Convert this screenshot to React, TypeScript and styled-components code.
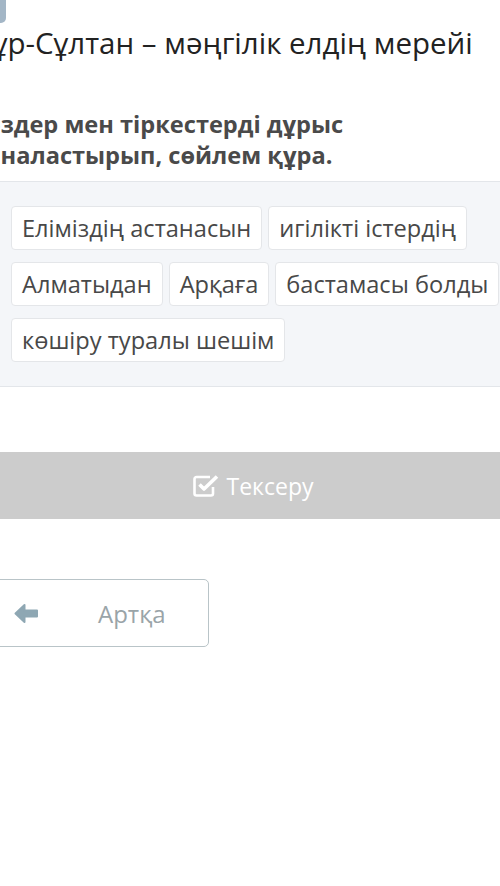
import React from "react";
import styled, { createGlobalStyle } from "styled-components";

const Global = createGlobalStyle`
  html, body { margin: 0; padding: 0; background: #fff; overflow: hidden; }
  body { font-family: "Open Sans", "Noto Sans", sans-serif; }
`;

const Page = styled.div`
  width: 560px;
  margin-left: -29px;
  display: flex;
  flex-direction: column;
`;

const Badge = styled.div`
  width: 40px;
  height: 23px;
  margin-left: -5px;
  background: #a3b6c6;
  border-radius: 0 0 5px 0;
`;

const Title = styled.h1`
  margin: 1px 0 0 0;
  font-size: 29.5px;
  font-weight: 400;
  line-height: 38px;
  color: #222;
  white-space: nowrap;
`;

const Instruction = styled.p`
  margin: 47px 0 0 0;
  font-size: 23.6px;
  font-weight: 700;
  line-height: 31px;
  color: #4a4a4a;
  white-space: nowrap;
`;

const Panel = styled.div`
  margin-top: 10px;
  background: #f4f6f9;
  border-top: 1px solid #e3e6ea;
  border-bottom: 1px solid #e3e6ea;
  padding: 24px 10px 24px 40px;
  display: flex;
  flex-wrap: wrap;
  gap: 12px 6px;
  align-content: flex-start;
`;

const Chip = styled.div`
  height: 44px;
  box-sizing: border-box;
  padding: 0 10px;
  display: flex;
  align-items: center;
  background: #fff;
  border: 1px solid #e4e6e9;
  border-radius: 4px;
  font-size: 23.6px;
  color: #484848;
  white-space: nowrap;
`;

const CheckButton = styled.div`
  margin-top: 65px;
  height: 67px;
  background: #cccccc;
  display: flex;
  align-items: center;
  justify-content: center;
  gap: 8px;
  color: #fff;
  font-size: 23px;
  padding-left: 4px;
`;

const BackButton = styled.div`
  margin-top: 60px;
  width: 238px;
  height: 68px;
  box-sizing: border-box;
  border: 1px solid #b9c4c8;
  border-radius: 5px;
  display: flex;
  align-items: center;
  padding-left: 42px;
  color: #9aa4a8;
  font-size: 24px;
`;

const BackLabel = styled.span`
  margin-left: 59px;
`;

const CheckIcon = () => (
  <svg width="26" height="24" viewBox="0 0 26 24">
    <path
      d="M20 13v6.5a2 2 0 0 1-2 2H3.5a2 2 0 0 1-2-2V5a2 2 0 0 1 2-2H17"
      fill="none"
      stroke="#fff"
      strokeWidth="2.6"
      strokeLinejoin="round"
    />
    <path d="M6.5 10.5l4.5 4.5L24 2.5" fill="none" stroke="#fff" strokeWidth="3.6" strokeLinejoin="round" />
  </svg>
);

const ArrowIcon = () => (
  <svg width="25" height="21" viewBox="0 0 25 21">
    <path
      d="M1.5 10.5L10.5 2v5.5h12.5v6H10.5V19z"
      fill="#8ea7b3"
      strokeLinejoin="round"
      stroke="#8ea7b3"
      strokeWidth="2"
    />
  </svg>
);

const words = [
  "Еліміздің астанасын",
  "игілікті істердің",
  "Алматыдан",
  "Арқаға",
  "бастамасы болды",
  "көшіру туралы шешім",
];

export default function App() {
  return (
    <>
      <Global />
      <Page>
        <Badge />
        <Title>Нұр-Сұлтан – мәңгілік елдің мерейі</Title>
        <Instruction>
          Сөздер мен тіркестерді дұрыс
          <br />
          орналастырып, сөйлем құра.
        </Instruction>
        <Panel>
          {words.map((w) => (
            <Chip key={w}>{w}</Chip>
          ))}
        </Panel>
        <CheckButton>
          <CheckIcon />
          <span>Тексеру</span>
        </CheckButton>
        <BackButton>
          <ArrowIcon />
          <BackLabel>Артқа</BackLabel>
        </BackButton>
      </Page>
    </>
  );
}
